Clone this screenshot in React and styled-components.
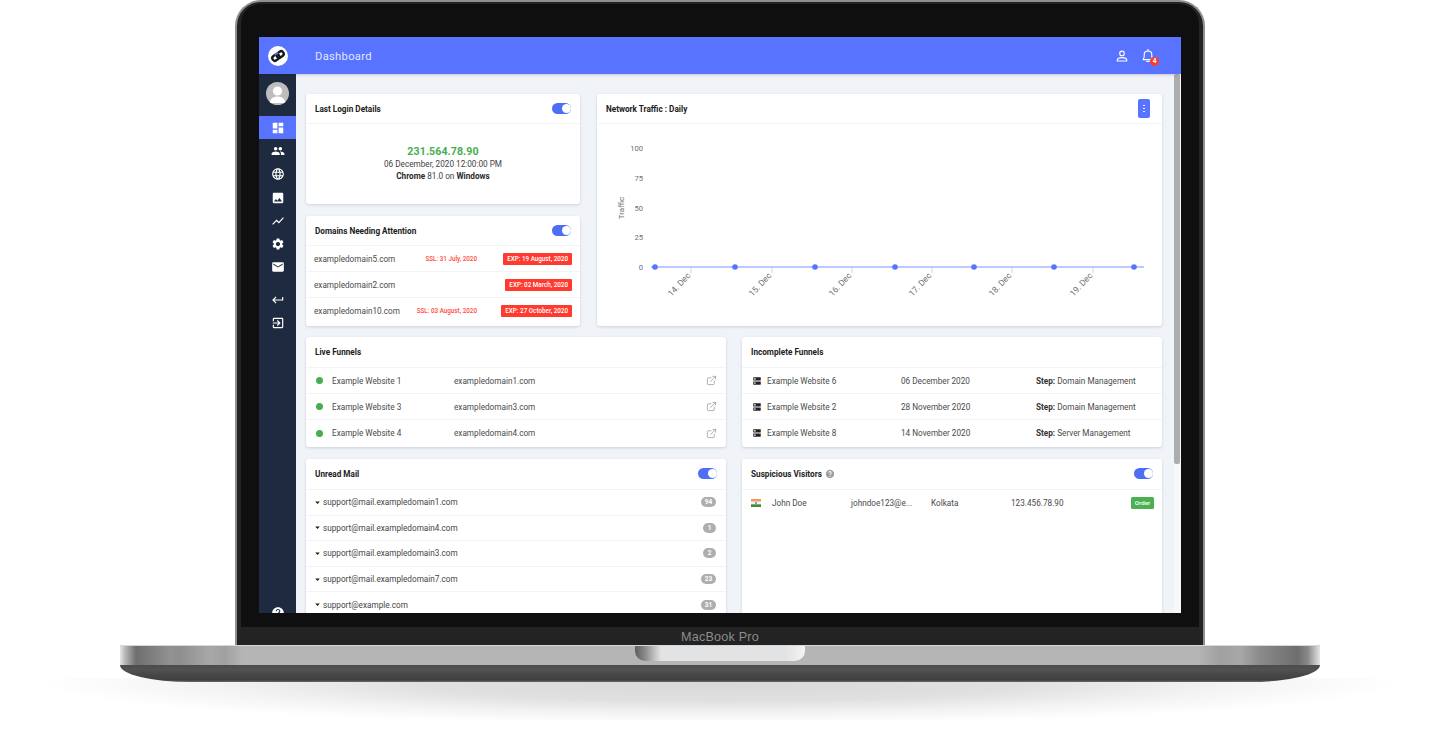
import React from "react";
import styled, { createGlobalStyle } from "styled-components";
import {
  MdDashboard, MdPeople, MdLanguage, MdPhoto, MdShowChart, MdSettings, MdEmail,
  MdKeyboardReturn, MdExitToApp, MdHelp, MdDns, MdArrowDropDown,
} from "react-icons/md";
import { ExternalLink } from "lucide-react";

const Global = createGlobalStyle`
  html, body { margin: 0; padding: 0; background: #fff; overflow: hidden; }
  * { box-sizing: border-box; }
  body { font-family: Roboto, "Liberation Sans", sans-serif; }
`;

const Stage = styled.div`
  position: relative;
  width: 1440px;
  height: 732px;
  display: flex;
  flex-direction: column;
  align-items: center;
  overflow: hidden;
  &::before {
    content: "";
    position: absolute;
    left: 40px;
    right: 40px;
    top: 678px;
    height: 42px;
    background: radial-gradient(ellipse 50% 100% at 50% 10%, #d8d8d8 0%, #e0e0e0 45%, #f3f3f3 74%, #ffffff 100%);
  }
`;

const Lid = styled.div`
  position: relative;
  width: 970px;
  height: 645px;
  padding: 2px 4px 0;
  background: #232323;
  border: 2px solid #8f8f8f;
  border-bottom: 0;
  border-radius: 26px 26px 0 0;
  display: flex;
  flex-direction: column;
`;

const Bezel = styled.div`
  height: 623px;
  padding: 33px 18px 14px;
  background: #0f0f0f;
  border-radius: 20px 20px 0 0;
`;

const Chin = styled.div`
  flex: 1;
  display: flex;
  align-items: center;
  justify-content: center;
  padding-top: 1px;
  color: #8c8c8c;
  font-size: 12.6px;
  font-family: "Liberation Sans", sans-serif;
  letter-spacing: 0.2px;
`;

const Screen = styled.div`
  width: 922px;
  height: 576px;
  display: flex;
  flex-direction: column;
  overflow: hidden;
  background: #f0f3f8;
`;

const Header = styled.header`
  flex: none;
  position: relative;
  z-index: 2;
  height: 37px;
  display: flex;
  align-items: center;
  background: #5773ff;
  box-shadow: 0 1px 3px rgba(0, 0, 0, 0.18);
  color: #fff;
`;

const LogoSlot = styled.div`
  width: 37px;
  display: flex;
  justify-content: center;
`;

const Title = styled.div`
  margin-left: 19px;
  flex: 1;
  padding-top: 1px;
  font-size: 11.2px;
  letter-spacing: 0.3px;
  color: rgba(255, 255, 255, 0.85);
`;

const HeaderIcons = styled.div`
  display: flex;
  align-items: center;
  gap: 14px;
  padding-right: 27px;
`;

const Bell = styled.div`
  position: relative;
  display: flex;
`;

const BellCount = styled.span`
  position: absolute;
  right: -5px;
  bottom: -3px;
  width: 9px;
  height: 9px;
  border-radius: 50%;
  background: #ff3b30;
  color: #fff;
  font-size: 6.5px;
  font-weight: 700;
  line-height: 9px;
  text-align: center;
`;

const Body = styled.div`
  flex: 1;
  min-height: 0;
  display: flex;
`;

const Sidebar = styled.nav`
  flex: none;
  width: 37px;
  display: flex;
  flex-direction: column;
  align-items: center;
  padding-top: 7.5px;
  background: #1e2a3f;
  overflow: hidden;
`;

const Avatar = styled.div`
  width: 23px;
  height: 23px;
  margin-bottom: 11.5px;
  border-radius: 50%;
  overflow: hidden;
  background: #bdbdbd;
  display: flex;
`;

const NavItem = styled.div`
  flex: none;
  width: 100%;
  height: 23.3px;
  display: flex;
  align-items: center;
  justify-content: center;
  color: #fff;
  background: ${(p) => (p.$active ? "#5773ff" : "transparent")};
  margin-top: ${(p) => p.$gap || 0}px;
`;

const NavFoot = styled(NavItem)`
  margin-top: auto;
  margin-bottom: -12px;
`;

const Main = styled.main`
  flex: 1;
  min-width: 0;
  padding: 20px 12px 0 10px;
  display: flex;
  flex-direction: column;
  gap: 11px;
  overflow: hidden;
`;

const Scrollbar = styled.div`
  flex: none;
  width: 7px;
  background: #f8f8f8;
  padding-right: 1px;
`;

const Thumb = styled.div`
  height: 390px;
  background: #adadad;
  border-radius: 2px;
`;

const TopRow = styled.div`
  flex: none;
  display: grid;
  grid-template-columns: 274px 565px;
  gap: 17px;
  height: 232px;
`;

const LeftStack = styled.div`
  display: flex;
  flex-direction: column;
  gap: 12px;
`;

const PairRow = styled.div`
  flex: none;
  display: grid;
  grid-template-columns: 420px 420px;
  gap: 16px;
  align-items: start;
  height: ${(p) => p.$height}px;
`;

const Card = styled.section`
  background: #fff;
  border-radius: 3px;
  box-shadow: 0 1px 3px rgba(30, 40, 60, 0.16);
  height: ${(p) => p.$height || 110}px;
  display: flex;
  flex-direction: column;
  overflow: hidden;
`;

const CardHead = styled.div`
  flex: none;
  height: ${(p) => (p.$tall ? 31 : 30)}px;
  padding: 0 9px ${(p) => (p.$tall ? 1 : 0)}px;
  display: flex;
  align-items: center;
  justify-content: space-between;
  border-bottom: 1px solid #f2f4f8;
`;

const CardTitle = styled.h3`
  margin: 0;
  display: flex;
  align-items: center;
  gap: 3px;
  font-size: 8.2px;
  font-weight: 700;
  color: #212121;
`;

const Toggle = styled.span`
  position: relative;
  width: 19px;
  height: 11px;
  border-radius: 6px;
  background: #4f6ef7;
  &::after {
    content: "";
    position: absolute;
    right: 0.5px;
    top: 1px;
    width: 9px;
    height: 9px;
    border-radius: 50%;
    background: #fff;
  }
`;

const MenuButton = styled.span`
  width: 12px;
  height: 19px;
  border-radius: 2px;
  margin-right: 3px;
  background: #5773ff;
  display: flex;
  flex-direction: column;
  align-items: center;
  justify-content: center;
  gap: 1.5px;
  i {
    width: 1.6px;
    height: 1.6px;
    border-radius: 50%;
    background: #fff;
  }
`;

const LoginBody = styled.div`
  flex: 1;
  display: flex;
  flex-direction: column;
  align-items: center;
  justify-content: center;
  font-size: 8.2px;
  line-height: 12px;
  color: #424242;
  b { font-weight: 700; color: #2b2b2b; }
`;

const LoginIp = styled.div`
  font-size: 10.6px;
  font-weight: 700;
  letter-spacing: 0.1px;
  color: #47ae4e;
`;

const Row = styled.div`
  flex: none;
  height: 26px;
  display: grid;
  align-items: center;
  grid-template-columns: ${(p) => p.$cols};
  padding: ${(p) => p.$pad || "0 9px 0 10px"};
  border-bottom: 1px solid #f2f4f8;
  font-size: 8.2px;
  color: #4a4a4a;
  white-space: nowrap;
  &:last-child { border-bottom: 0; }
  b { font-weight: 700; color: #333; }
`;

const SslDate = styled.span`
  justify-self: end;
  font-size: 6.3px;
  font-weight: 500;
  color: #ff4b40;
`;

const ExpBadge = styled.span`
  justify-self: end;
  padding: 0 4px;
  height: 12px;
  line-height: 12px;
  border-radius: 1px;
  background: #ff3b30;
  color: #fff;
  font-size: 6.3px;
  font-weight: 500;
`;

const Dot = styled.span`
  width: 7px;
  height: 7px;
  border-radius: 50%;
  background: #47ae4e;
`;

const LinkOut = styled.span`
  justify-self: end;
  display: flex;
  color: #8f8f8f;
`;

const ServerIcon = styled.span`
  display: flex;
  color: #222;
`;

const MailRow = styled.div`
  flex: none;
  height: 25.6px;
  display: flex;
  align-items: center;
  justify-content: space-between;
  padding: 0 10px 0 6px;
  border-bottom: 1px solid #f0f3f8;
  font-size: 8.2px;
  color: #444;
`;

const MailAddress = styled.span`
  display: flex;
  align-items: center;
  svg { color: #1c1c1c; }
`;

const CountPill = styled.span`
  min-width: ${(p) => (p.$wide ? 15 : 13)}px;
  height: 10px;
  padding: 0 3px;
  border-radius: 5px;
  background: #aeaeae;
  color: #fff;
  font-size: 6.5px;
  font-weight: 700;
  line-height: 10px;
  text-align: center;
`;

const OrderBadge = styled.span`
  justify-self: end;
  width: 23px;
  height: 12px;
  border-radius: 1.5px;
  background: #4caf50;
  color: #e8f5e9;
  font-size: 6.2px;
  font-weight: 700;
  line-height: 12px;
  text-align: center;
`;

const Base = styled.div`
  position: relative;
  width: 1200px;
  display: flex;
  flex-direction: column;
`;

const Deck = styled.div`
  height: 20px;
  display: flex;
  justify-content: center;
  border-top: 1px solid #d8d8d8;
  background: linear-gradient(
    90deg,
    #e6e6e6 0, #b8b8b8 5px, #6e6e6e 16px, #7c7c7c 30px, #929292 50px, #8e8e8e 60px, #a8a8a8 90px, #a0a0a0 105px, #b5b5b5 122px,
    #b5b5b5 1078px, #a0a0a0 1100px, #a8a8a8 1120px, #8a8a8a 1140px, #6e6e6e 1178px, #8a8a8a 1188px, #e6e6e6 1200px
  );
`;

const Notch = styled.div`
  width: 170px;
  height: 15px;
  border-radius: 0 0 10px 10px;
  background: linear-gradient(90deg, #5f5f5f 0, #8a8a8a 10px, #cfcfcf 22px, #e2e3e5 26px, #e2e3e5 150px, #f4f4f4 170px);
`;

const Keel = styled.div`
  height: 17px;
  border-radius: 0 0 70px 70px / 0 0 17px 17px;
  background: linear-gradient(180deg, #4c4c4c 0, #525252 5px, #484848 9px, #3f3f3f 15px, #6a6a6a 17px);
`;

const sideNav = [MdDashboard, MdPeople, MdLanguage, MdPhoto, MdShowChart, MdSettings, MdEmail];

const domains = [
  { name: "exampledomain5.com", ssl: "SSL: 31 July, 2020", exp: "EXP: 19 August, 2020" },
  { name: "exampledomain2.com", ssl: "", exp: "EXP: 02 March, 2020" },
  { name: "exampledomain10.com", ssl: "SSL: 03 August, 2020", exp: "EXP: 27 October, 2020" },
];

const live = [
  ["Example Website 1", "exampledomain1.com"],
  ["Example Website 3", "exampledomain3.com"],
  ["Example Website 4", "exampledomain4.com"],
];

const incomplete = [
  ["Example Website 6", "06 December 2020", "Domain Management"],
  ["Example Website 2", "28 November 2020", "Domain Management"],
  ["Example Website 8", "14 November 2020", "Server Management"],
];

const mail = [
  ["support@mail.exampledomain1.com", "94"],
  ["support@mail.exampledomain4.com", "1"],
  ["support@mail.exampledomain3.com", "2"],
  ["support@mail.exampledomain7.com", "23"],
  ["support@example.com", "31"],
];

const Logo = () => (
  <svg width="20" height="20" viewBox="0 0 20 20">
    <circle cx="10" cy="10" r="10" fill="#fff" />
    <g fill="none" strokeLinecap="round" transform="rotate(-35 10 10)">
      <rect x="3.6" y="7.4" width="7.6" height="5.2" rx="2.6" stroke="#14161c" strokeWidth="2.3" />
      <rect x="8.8" y="7.4" width="7.6" height="5.2" rx="2.6" stroke="#14161c" strokeWidth="2.3" />
      <path d="M8.6 7.4h2.8" stroke="#5773ff" strokeWidth="1.6" />
    </g>
  </svg>
);

const PersonIcon = () => (
  <svg width="12" height="12" viewBox="0 0 12 12" fill="none" stroke="#fff" strokeWidth="1.1">
    <circle cx="6" cy="3.4" r="2.3" />
    <path d="M1.2 11v-.8C1.2 8.4 3.4 7.6 6 7.6s4.8.8 4.8 2.6v.8z" strokeLinejoin="round" />
  </svg>
);

const BellIcon = () => (
  <svg width="12" height="14" viewBox="0 0 12 14" fill="none" stroke="#fff" strokeWidth="1.1">
    <path d="M1 10.6c.9-.8 1.2-1.6 1.2-3.4V5.6C2.2 3.4 3.8 2 6 2s3.8 1.4 3.8 3.6v1.6c0 1.8.3 2.6 1.2 3.4z" strokeLinejoin="round" />
    <path d="M6 .4V2M4.8 12.4h2.4" strokeLinecap="round" />
  </svg>
);

const AvatarArt = () => (
  <svg width="23" height="23" viewBox="0 0 23 23">
    <circle cx="11.5" cy="9" r="4.6" fill="#fff" />
    <path d="M3.5 21c.6-4.6 4-6.6 8-6.6s7.4 2 8 6.6z" fill="#fff" />
  </svg>
);

const IndiaFlag = () => (
  <svg width="10" height="8" viewBox="0 0 10 8">
    <rect width="10" height="2.7" fill="#f09a55" />
    <rect y="2.7" width="10" height="2.6" fill="#f4f4f4" />
    <rect y="5.3" width="10" height="2.7" fill="#3f8f3f" />
    <circle cx="5" cy="4" r="1" fill="#7a7aa8" />
  </svg>
);

// Daily traffic line; coordinates are laid out in the viewBox of the chart panel.
const TrafficChart = () => {
  const yTicks = [["100", 148], ["75", 178], ["50", 208], ["25", 237], ["0", 267]];
  const points = [655, 735, 815, 895, 974, 1054, 1134];
  const days = [["14. Dec", 691], ["15. Dec", 772], ["16. Dec", 852], ["17. Dec", 932], ["18. Dec", 1012], ["19. Dec", 1093]];
  return (
    <svg width="565" height="202" viewBox="597 124 565 202" style={{ display: "block" }}>
      <g fontFamily="Roboto, sans-serif" fontSize="7.6" fill="#707070">
        {yTicks.map(([label, y]) => (
          <text key={label} x="643" y={y + 2.8} textAnchor="end">{label}</text>
        ))}
        <text transform="translate(623.5 208) rotate(-90)" textAnchor="middle" fontSize="8">Traffic</text>
        {days.map(([label, x]) => (
          <g key={label}>
            <line x1={x} x2={x} y1="267" y2="273" stroke="#d4d7de" />
            <text transform={`translate(${x} 276) rotate(-47)`} textAnchor="end" fontSize="8.6">{label}</text>
          </g>
        ))}
      </g>
      <line x1="651" x2="1144" y1="267" y2="267" stroke="#7e95ff" strokeWidth="1.2" />
      {points.map((x) => (
        <circle key={x} cx={x} cy="267" r="2.8" fill="#5773ff" />
      ))}
    </svg>
  );
};

export default function App() {
  return (
    <Stage>
      <Global />
      <Lid>
        <Bezel>
          <Screen>
            <Header>
              <LogoSlot><Logo /></LogoSlot>
              <Title>Dashboard</Title>
              <HeaderIcons>
                <PersonIcon />
                <Bell>
                  <BellIcon />
                  <BellCount>4</BellCount>
                </Bell>
              </HeaderIcons>
            </Header>
            <Body>
              <Sidebar>
                <Avatar><AvatarArt /></Avatar>
                {sideNav.map((Icon, i) => (
                  <NavItem key={i} $active={i === 0}><Icon size={14} /></NavItem>
                ))}
                <NavItem $gap={9}><MdKeyboardReturn size={14} /></NavItem>
                <NavItem><MdExitToApp size={14} /></NavItem>
                <NavFoot><MdHelp size={14} /></NavFoot>
              </Sidebar>
              <Main>
                <TopRow>
                  <LeftStack>
                    <Card>
                      <CardHead>
                        <CardTitle>Last Login Details</CardTitle>
                        <Toggle />
                      </CardHead>
                      <LoginBody>
                        <LoginIp>231.564.78.90</LoginIp>
                        <div>06 December, 2020 12:00:00 PM</div>
                        <div><b>Chrome</b> 81.0 on <b>Windows</b></div>
                      </LoginBody>
                    </Card>
                    <Card>
                      <CardHead>
                        <CardTitle>Domains Needing Attention</CardTitle>
                        <Toggle />
                      </CardHead>
                      {domains.map((d) => (
                        <Row key={d.name} $cols="1fr auto 95px" $pad="0 8px">
                          <span>{d.name}</span>
                          <SslDate>{d.ssl}</SslDate>
                          <ExpBadge>{d.exp}</ExpBadge>
                        </Row>
                      ))}
                    </Card>
                  </LeftStack>
                  <Card $height={232}>
                    <CardHead>
                      <CardTitle>Network Traffic : Daily</CardTitle>
                      <MenuButton><i /><i /><i /></MenuButton>
                    </CardHead>
                    <TrafficChart />
                  </Card>
                </TopRow>
                <PairRow $height={111}>
                  <Card>
                    <CardHead $tall><CardTitle>Live Funnels</CardTitle></CardHead>
                    {live.map(([site, domain]) => (
                      <Row key={site} $cols="16px 122px 1fr auto">
                        <Dot />
                        <span>{site}</span>
                        <span>{domain}</span>
                        <LinkOut><ExternalLink size={11} strokeWidth={1.5} /></LinkOut>
                      </Row>
                    ))}
                  </Card>
                  <Card>
                    <CardHead $tall><CardTitle>Incomplete Funnels</CardTitle></CardHead>
                    {incomplete.map(([site, date, step]) => (
                      <Row key={site} $cols="15px 134px 135px 1fr" $pad="0 10px">
                        <ServerIcon><MdDns size={10} /></ServerIcon>
                        <span>{site}</span>
                        <span>{date}</span>
                        <span><b>Step:</b> {step}</span>
                      </Row>
                    ))}
                  </Card>
                </PairRow>
                <PairRow $height={180}>
                  <Card $height={180}>
                    <CardHead $tall>
                      <CardTitle>Unread Mail</CardTitle>
                      <Toggle />
                    </CardHead>
                    {mail.map(([address, count]) => (
                      <MailRow key={address}>
                        <MailAddress><MdArrowDropDown size={11} />{address}</MailAddress>
                        <CountPill $wide={count.length > 1}>{count}</CountPill>
                      </MailRow>
                    ))}
                  </Card>
                  <Card $height={180}>
                    <CardHead $tall>
                      <CardTitle>Suspicious Visitors <MdHelp size={10} color="#9e9e9e" /></CardTitle>
                      <Toggle />
                    </CardHead>
                    <Row $cols="21px 79px 80px 80px 1fr auto" $pad="0 8px 0 9px">
                      <IndiaFlag />
                      <span>John Doe</span>
                      <span>johndoe123@e...</span>
                      <span>Kolkata</span>
                      <span>123.456.78.90</span>
                      <OrderBadge>Order</OrderBadge>
                    </Row>
                  </Card>
                </PairRow>
              </Main>
              <Scrollbar><Thumb /></Scrollbar>
            </Body>
          </Screen>
        </Bezel>
        <Chin>MacBook Pro</Chin>
      </Lid>
      <Base>
        <Deck><Notch /></Deck>
        <Keel />
      </Base>
    </Stage>
  );
}
